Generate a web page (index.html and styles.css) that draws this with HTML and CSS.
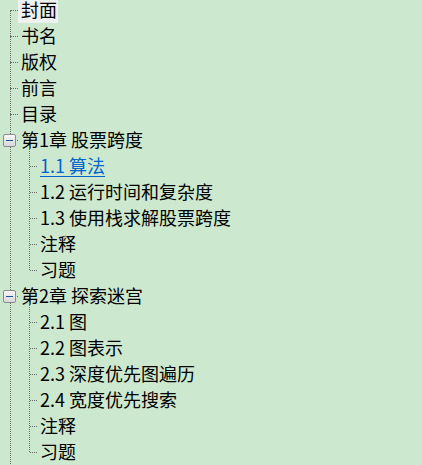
FILE: index.html
```html
<!DOCTYPE html>
<html lang="zh-CN">
<head>
<meta charset="utf-8">
<title>目录树</title>
<link rel="stylesheet" href="styles.css">
</head>
<body>
<ul class="tree">
  <li class="item"><div class="row"><span class="label selected">封面</span></div></li>
  <li class="item"><div class="row"><span class="label">书名</span></div></li>
  <li class="item"><div class="row"><span class="label">版权</span></div></li>
  <li class="item"><div class="row"><span class="label">前言</span></div></li>
  <li class="item"><div class="row"><span class="label">目录</span></div></li>
  <li class="item">
    <div class="row parent"><span class="toggle"></span><span class="label">第1章 股票跨度</span></div>
    <ul class="children">
      <li class="item"><div class="row"><a class="label link" href="#">1.1 算法</a></div></li>
      <li class="item"><div class="row"><span class="label">1.2 运行时间和复杂度</span></div></li>
      <li class="item"><div class="row"><span class="label">1.3 使用栈求解股票跨度</span></div></li>
      <li class="item"><div class="row"><span class="label">注释</span></div></li>
      <li class="item"><div class="row"><span class="label">习题</span></div></li>
    </ul>
  </li>
  <li class="item">
    <div class="row parent"><span class="toggle"></span><span class="label">第2章 探索迷宫</span></div>
    <ul class="children">
      <li class="item"><div class="row"><span class="label">2.1 图</span></div></li>
      <li class="item"><div class="row"><span class="label">2.2 图表示</span></div></li>
      <li class="item"><div class="row"><span class="label">2.3 深度优先图遍历</span></div></li>
      <li class="item"><div class="row"><span class="label">2.4 宽度优先搜索</span></div></li>
      <li class="item"><div class="row"><span class="label">注释</span></div></li>
      <li class="item"><div class="row"><span class="label">习题</span></div></li>
    </ul>
  </li>
</ul>
</body>
</html>
```
FILE: styles.css
```css
html, body {
  margin: 0;
  padding: 0;
  background: #cce8cf;
  overflow: hidden;
}

body {
  font-family: "Noto Sans CJK SC", "Microsoft YaHei", sans-serif;
  font-size: 18px;
  color: #000;
}

.tree {
  list-style: none;
  margin: 0;
  padding: 0;
  position: relative;
}

.tree::before {
  content: "";
  position: absolute;
  left: 10px;
  top: 10px;
  bottom: -10px;
  border-left: 1px dotted #6a6a6a;
}

.item {
  margin: 0;
  padding: 0;
}

.row {
  position: relative;
  height: 26px;
  display: flex;
  align-items: flex-start;
  padding-left: 18px;
}

.row::before {
  content: "";
  position: absolute;
  left: 10px;
  width: 8px;
  top: 10px;
  border-top: 1px dotted #6a6a6a;
}

.label {
  display: block;
  height: 18px;
  line-height: 18px;
  padding: 0 1px 5px 3px;
  white-space: nowrap;
}

.label.selected {
  background: #eff1ef;
}

.link {
  color: #0066cc;
  text-decoration: underline;
  text-underline-offset: 3px;
}

.toggle {
  position: absolute;
  left: 3px;
  top: 4px;
  width: 11px;
  height: 11px;
  border: 1px solid #8a8b8b;
  border-radius: 2px;
  background: linear-gradient(#f8f8f8, #d8d8d8);
  z-index: 1;
}

.toggle::after {
  content: "";
  position: absolute;
  left: 2px;
  right: 2px;
  top: 5px;
  height: 1px;
  background: #1d4f9b;
}

.children {
  list-style: none;
  margin: 0;
  padding: 0;
  position: relative;
}

.children::before {
  content: "";
  position: absolute;
  left: 29px;
  top: -10px;
  bottom: 16px;
  border-left: 1px dotted #6a6a6a;
}

.children .row {
  padding-left: 37px;
}

.children .row::before {
  left: 30px;
  width: 7px;
}
```
